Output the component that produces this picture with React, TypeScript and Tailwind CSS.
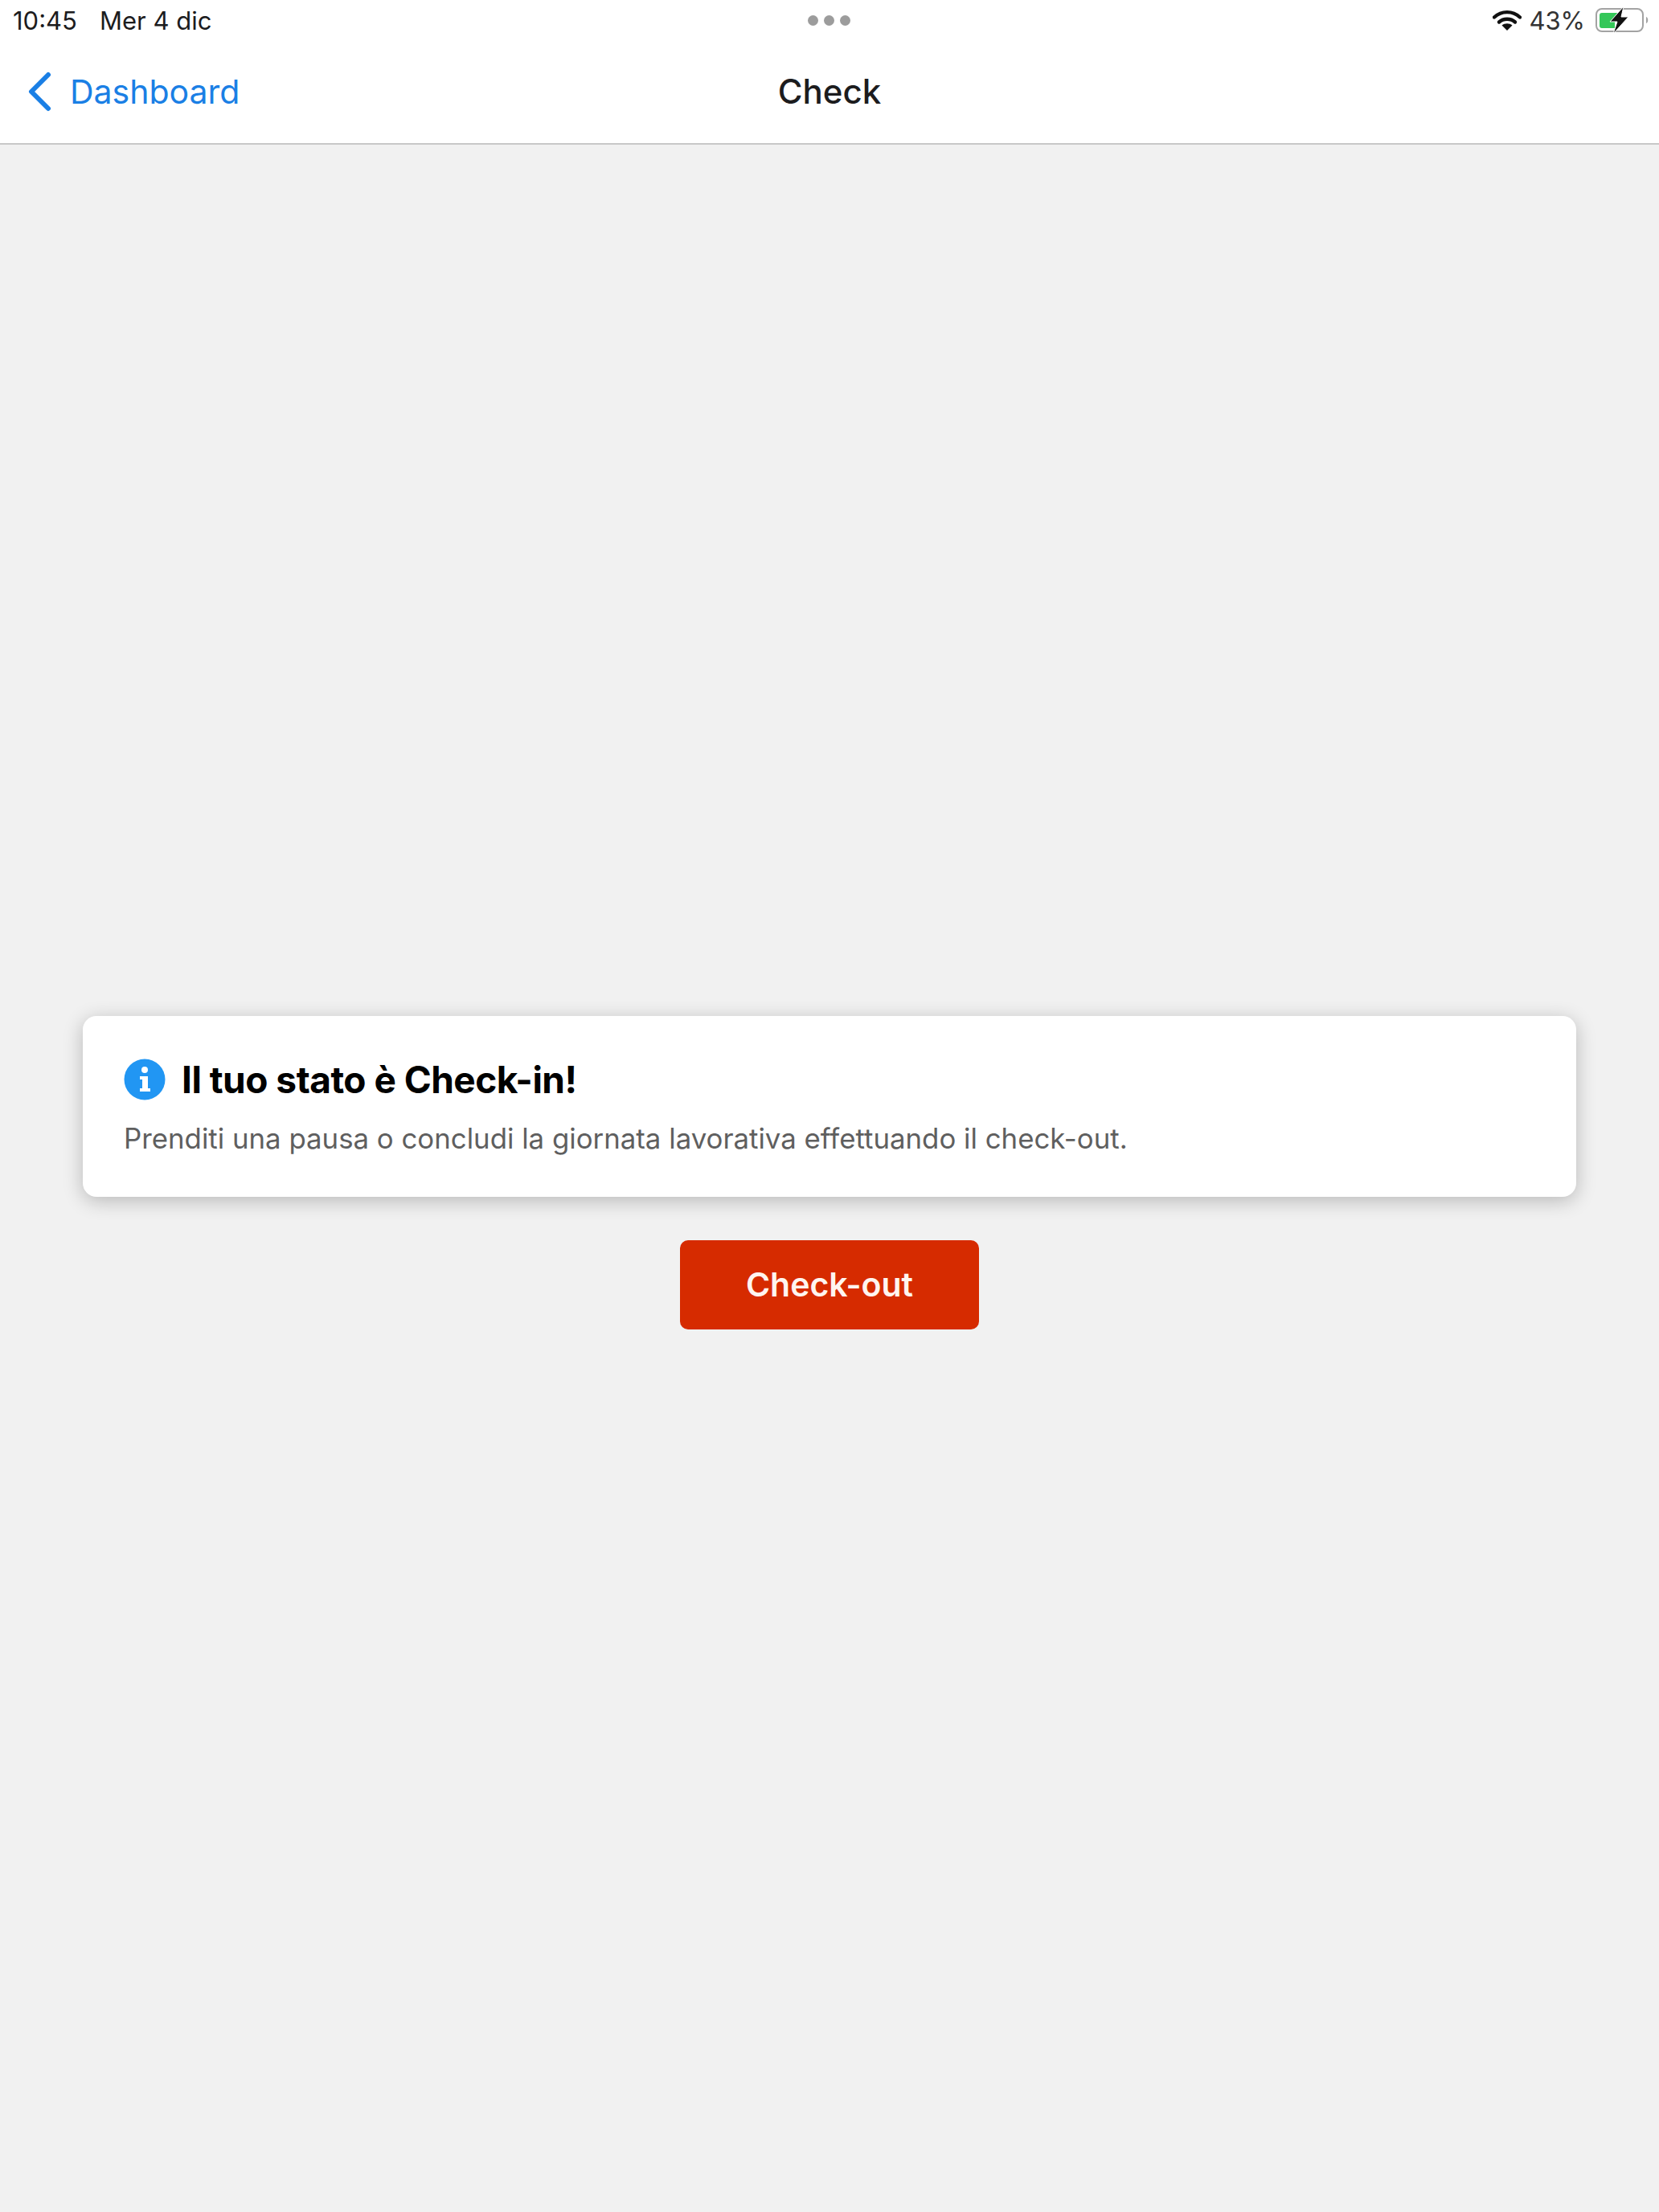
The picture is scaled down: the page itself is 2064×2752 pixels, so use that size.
const StatusBar = () => {
  return (
    <div className="relative flex h-[50px] items-center justify-between pl-[16px] pr-[11px] text-[#1c1c1e]">
      <div className="flex items-center gap-[28px] text-[31px] leading-none">
        <span>10:45</span>
        <span>Mer 4 dic</span>
      </div>
      <div className="absolute left-[1005px] top-[19px] flex gap-[7px]">
        <div className="h-[13px] w-[13px] rounded-full bg-[#9c9c9c]"></div>
        <div className="h-[13px] w-[13px] rounded-full bg-[#9c9c9c]"></div>
        <div className="h-[13px] w-[13px] rounded-full bg-[#9c9c9c]"></div>
      </div>
      <div className="flex items-center">
        <svg width="36" height="28" viewBox="0 0 36 28" className="mr-[9px]">
          <path d="M2 10.5C11 2 25 2 34 10.5" fill="none" stroke="#111" strokeWidth="4.4" strokeLinecap="round" />
          <path d="M8 16.5C13.5 11.5 22.5 11.5 28 16.5" fill="none" stroke="#111" strokeWidth="4.4" strokeLinecap="round" />
          <path d="M18 27L11.5 20.5C15 17.6 21 17.6 24.5 20.5Z" fill="#111" />
        </svg>
        <span className="mr-[13px] text-[31px] leading-none text-[#333]">43%</span>
        <svg width="68" height="34" viewBox="0 0 68 34">
          <rect x="1" y="3" width="58" height="28" rx="7" fill="none" stroke="#a3a3a3" strokeWidth="2" />
          <path d="M8 8H28L20 19H24V27H8C6 27 5 26 5 24V11C5 9 6 8 8 8Z" fill="#34c759" />
          <path d="M63 13C66 14 66 20 63 21Z" fill="#a3a3a3" />
          <path d="M35 0L18 19H27L22 34L41 13H32Z" fill="#111" stroke="#fff" strokeWidth="1" />
        </svg>
      </div>
    </div>
  );
};

const App = () => {
  return (
    <div
      className="flex h-screen flex-col bg-[#f1f1f1]"
      style={{ fontFamily: "Inter, 'Noto Sans', sans-serif" }}
    >
      <div className="border-b-2 border-[#c8c8c8] bg-white">
        <StatusBar />
        <div className="relative flex h-[128px] items-center justify-center">
          <div className="absolute left-[34px] top-[39px] flex items-center gap-[23px] text-[#1a7fe5]">
            <svg width="30" height="50" viewBox="0 0 30 50">
              <path d="M26 4L5 25L26 46" fill="none" stroke="#1a7fe5" strokeWidth="6" strokeLinecap="round" strokeLinejoin="round" />
            </svg>
            <span className="text-[41px] leading-none">Dashboard</span>
          </div>
          <span className="text-[42px] font-medium leading-none text-[#1c1c1e]">Check</span>
        </div>
      </div>
      <div className="flex flex-1 flex-col items-center justify-center px-[103px] pb-[14px]">
        <div className="h-[225px] w-full rounded-[17px] bg-white px-[51px] pt-[53px] shadow-[0_5px_24px_rgba(0,0,0,0.24)]">
          <div className="flex items-center gap-[20px]">
            <svg width="52" height="52" viewBox="0 0 52 52">
              <circle cx="26" cy="26" r="25.5" fill="#2196f3" />
              <circle cx="26" cy="14" r="4" fill="#fff" />
              <path d="M20 22H30V37H33V41H20V37H23V26H20Z" fill="#fff" />
            </svg>
            <span className="text-[46px] font-bold leading-none tracking-[-0.5px] text-black">Il tuo stato è Check-in!</span>
          </div>
          <p className="mt-[30px] text-[34.8px] leading-none text-[#5f5f5f]">
            Prenditi una pausa o concludi la giornata lavorativa effettuando il check-out.
          </p>
        </div>
        <button className="mt-[54px] flex h-[111px] w-[372px] items-center justify-center rounded-[10px] bg-[#d62b00] text-[41px] font-semibold text-[#fff5f0]">
          Check-out
        </button>
      </div>
    </div>
  );
};

export default App;
